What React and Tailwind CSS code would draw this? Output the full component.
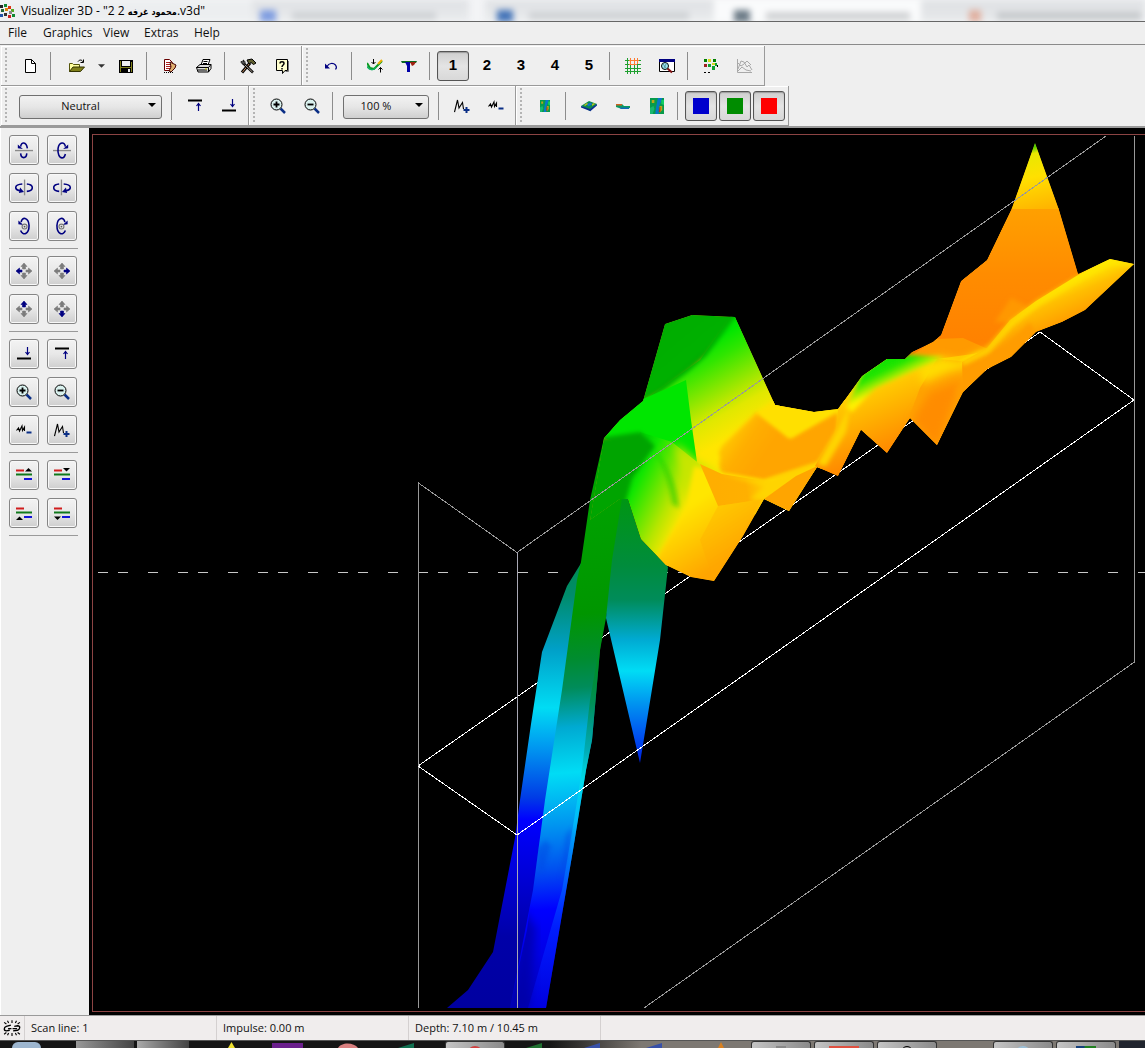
import React from 'react';

/* ---------- small building blocks ---------- */

function Icon({ children, size = 16, crisp = false }) {
  return (
    <svg width={size} height={size} viewBox="0 0 16 16" fill="none" aria-hidden="true" shapeRendering={crisp ? 'crispEdges' : 'auto'}>
      {children}
    </svg>
  );
}

function Grip() {
  return (
    <div className="mr-1 h-9 w-1 shrink-0 bg-[radial-gradient(circle_at_1px_1px,#b4b4b4_1px,transparent_1.5px)] bg-[length:4px_4px]" />
  );
}

function Sep() {
  return <div className="mr-1.5 ml-[3px] h-7 w-px shrink-0 bg-[#8c8c8c]" />;
}

function Group({ children }) {
  return (
    <div className="flex h-10 items-center border-r border-b border-[#9a9a9a] pr-0.5 pl-1 shadow-[inset_1px_1px_0_#ffffff]">
      <Grip />
      {children}
    </div>
  );
}

function Tool({ label, pressed = false, children }) {
  return (
    <button
      type="button"
      aria-label={label}
      aria-pressed={pressed || undefined}
      className="flex h-8 w-[34px] shrink-0 items-center justify-center"
    >
      {pressed ? (
        <span className="flex h-[30px] w-8 items-center justify-center rounded-[3px] border border-[#555] bg-linear-to-b from-[#cfcfcf] via-[#e4e4e4] to-[#d8d8d8] shadow-[inset_0_1px_1px_#9c9c9c]">
          {children}
        </span>
      ) : (
        children
      )}
    </button>
  );
}

function Digit({ n, pressed }) {
  return (
    <Tool label={'View ' + n} pressed={pressed}>
      <span className="font-['Liberation_Sans',sans-serif] text-[15px] font-bold text-black">{n}</span>
    </Tool>
  );
}

function Combo({ label, options, box }) {
  return (
    <div className={'relative shrink-0 ' + box}>
      <select
        aria-label={label}
        className="h-6 w-full appearance-none rounded-[3px] border border-[#707070] bg-linear-to-b from-[#f2f2f2] via-[#e6e6e6] to-[#cfcfcf] pr-5 text-center text-[11px] [text-align-last:center]"
      >
        {options.map((o) => (
          <option key={o}>{o}</option>
        ))}
      </select>
      <svg className="pointer-events-none absolute top-[11px] right-1.5" width="8" height="4" viewBox="0 0 8 4" aria-hidden="true">
        <path d="M0 0h8L4 4z" fill="#000" />
      </svg>
    </div>
  );
}

/* ---------- icons ---------- */

const NewIcon = () => (
  <Icon>
    <path d="M3.500 1.500h6l4 4v9h-10z" fill="#fff" stroke="#000" />
    <path d="M9.500 1.500v4h4" stroke="#000" />
  </Icon>
);
const OpenIcon = () => (
  <Icon>
    <path d="M.5 13.500v-8h3l1 1h6v3" fill="#ffff9c" stroke="#55550a" />
    <path d="M.5 13.500l3.500-4.500h11.500l-4 4.500z" fill="#80801a" stroke="#333300" />
    <path d="M9 3.500c1.500-2 4-2 5 .5M14.500 1.500v3h-3" stroke="#000" />
  </Icon>
);
const SaveIcon = () => (
  <Icon crisp>
    <path d="M1 2h14v13H1z" fill="#000" />
    <path d="M2 3h1v11H2zM13 4h1v10h-1zM3 9h10v1H3z" fill="#80801a" />
    <path d="M4 3h8v5H4z" fill="#efefef" />
    <path d="M10 11h2v3h-2z" fill="#efefef" />
  </Icon>
);
const ReportIcon = () => (
  <Icon>
    <path d="M2.500 1.500h5l3 3v8h-8z" fill="#fff" stroke="#600" />
    <path d="M4 4.500h4M4 6.500h6M4 8.500h5M4 10.500h5" stroke="#b02020" />
    <path d="M8 4l6 3-1 3-4 4-2-1 2-4z" fill="#e0b070" stroke="#400" />
    <path d="M2 14.500h9" stroke="#000" strokeDasharray="1 1" />
  </Icon>
);
const PrintIcon = () => (
  <Icon>
    <path d="M5 7l2-5.500h7L12 7z" fill="#fff" stroke="#000" />
    <path d="M7.500 3.500h4M7 5.500h4" stroke="#000" />
    <path d="M.5 9.500L4 6.500h11l-2.500 3zM.5 9.500h12v4.500H2z" fill="#ddd" stroke="#000" />
    <path d="M15 6.500v4l-2.500 3.500M2 12h9" stroke="#000" />
    <path d="M9 11h2" stroke="#cc0" />
  </Icon>
);
const ToolsIcon = () => (
  <Icon>
    <path d="M2 14.500L10 5" stroke="#000" strokeWidth="3" />
    <path d="M2.500 14L9.500 5.500" stroke="#c89060" />
    <path d="M3 5l10 9.500" stroke="#000" strokeWidth="2.500" />
    <path d="M4.500 6.500l8 7.500" stroke="#e0d0c0" strokeWidth=".8" />
    <path d="M7 2l5-1 4 4-2.500 1.500L11 4.500 9 6z" fill="#606030" stroke="#000" />
    <path d="M1 3.500c0 2 1.500 3 4 2.500.5-2-.5-3.500-2-4L3.500 4z" fill="#666" stroke="#000" strokeWidth=".8" />
  </Icon>
);
const HelpIcon = () => (
  <Icon>
    <path d="M2.500 1.500h11v11H11l-2.500 3v-3h-6z" fill="#ffffcf" stroke="#000" />
    <path d="M14.500 3v10.500h-3" stroke="#777" />
    <path d="M6 5.500C6 3.200 10 3.200 10 5.500 10 7 8 7 8 9M8 10v1.500" stroke="#000" strokeWidth="1.500" />
  </Icon>
);
const UndoIcon = () => (
  <Icon>
    <path d="M4 8.500C6 5 10 4.500 12.500 7c1.200 1.500.8 3.500 0 4.500" stroke="#000080" strokeWidth="1.200" />
    <path d="M2 5.500v5h5z" fill="#000080" />
  </Icon>
);
const WaveArrowsIcon = () => (
  <Icon>
    <path d="M0 5l3 5 4 1 4-4 4-4" stroke="#0a9a20" strokeWidth="2" />
    <path d="M0 8.500c3 4 6 4 9 1" stroke="#10b060" strokeWidth="1.500" />
    <path d="M11 6l4-4" stroke="#f0b000" strokeWidth="2" />
    <path d="M6.500 1v5M4.500 4l2 2 2-2M13.500 14.500v-5M11.500 11.500l2-2 2 2" stroke="#000" />
  </Icon>
);
const ConeIcon = () => (
  <Icon>
    <path d="M0 3h16l-1 2H1z" fill="#0a6a20" />
    <path d="M4 4h5v10H6V8z" fill="#0000a8" />
    <path d="M9 4h6l-2 3-2 1z" fill="#a02010" />
  </Icon>
);
const GridIcon = () => (
  <Icon crisp>
    <path d="M2 0v16M5 0v16M9 0v16M12 0v16M0 2h16M0 6h16M0 10h16M0 13h16" stroke="#1fa030" />
    <path d="M5 0v7M9 0v7M12 0v6M4 2h10M4 6h8" stroke="#ff7a30" />
  </Icon>
);
const PreviewIcon = () => (
  <Icon>
    <path d="M.5 1.500h15v12H.5z" fill="#fff" stroke="#000" />
    <path d="M0 1h16v3H0z" fill="#000080" />
    <circle cx="6" cy="8" r="3.500" fill="#9ee4ef" stroke="#000" />
    <path d="M4 6l3 4M7 6l-2 4" stroke="#3b7b88" strokeWidth=".7" />
    <path d="M8.500 10.500l4.500 4" stroke="#801010" strokeWidth="2" />
  </Icon>
);
const DotsIcon = () => (
  <Icon crisp>
    <path d="M1 1h3v3H1zM10 1h3v3h-3z" fill="#008000" />
    <path d="M5 1h3v3H5zM9 5h3v2H9z" fill="#d8d820" />
    <path d="M1 6h3v3H1z" fill="#a02020" />
    <path d="M5 6h3v3H5zM9 8h3v4H9zM12 5h2v3h-2z" fill="#10a030" />
    <path d="M1 14h2v1H1zM5 14h2v1H5zM14 7h1v2h-1z" fill="#000" />
  </Icon>
);
const ChartIcon = () => (
  <Icon>
    <path d="M.5 1v13.500H15" stroke="#a8a8a8" />
    <path d="M1 11l3-8 3 1 3 5 2-2 3 5M1 5l3 3 3-2 3-3 4 4M1 13l4-4 4 3 5 1" stroke="#a8a8a8" />
  </Icon>
);
const RaiseIcon = () => (
  <Icon>
    <path d="M1 2.500h14" stroke="#000" strokeWidth="2" />
    <path d="M11.500 13V6M9.500 8l2-2.500 2 2.500" stroke="#000080" strokeWidth="1.200" />
  </Icon>
);
const LowerIcon = () => (
  <Icon>
    <path d="M1 12.500h14" stroke="#000" strokeWidth="2" />
    <path d="M11.500 1v7M9.500 6l2 2.500 2-2.500" stroke="#000080" strokeWidth="1.200" />
  </Icon>
);
function Lens({ plus }) {
  return (
    <Icon>
      <path d="M10.500 10.500l4.500 4.500" stroke="#0b2f86" strokeWidth="2.500" />
      <circle cx="6.500" cy="6.500" r="5.500" fill="#d9f1ee" stroke="#000" />
      <path d={plus ? 'M3.500 6.500h6M6.500 3.500v6' : 'M3.500 6.500h6'} stroke="#000" strokeWidth="1.800" />
    </Icon>
  );
}
const AmpPlusIcon = () => (
  <Icon>
    <path d="M.5 14L3.500 2l1.500 8 3.500-5.500L9.500 11" stroke="#000" strokeWidth="1.100" />
    <path d="M9.500 12h6M12.500 9v6" stroke="#0b2f86" strokeWidth="2" />
  </Icon>
);
const AmpMinusIcon = () => (
  <Icon>
    <path d="M.5 8.500L2.500 6l1 3 2.500-5 .5 4.500 2-3.500v4" stroke="#000" strokeWidth="1.100" />
    <path d="M10.500 10.500h5" stroke="#0b2f86" strokeWidth="2" />
  </Icon>
);
const MapGlyph = () => (
  <g>
    <path d="M0 0h16v16H0z" fill="#079b4b" />
    <path d="M9 0h5l-2 5-2 4v7H6l1-7z" fill="#0878c8" />
    <path d="M0 10l4-2 1 3-2 5H0z" fill="#18b870" />
    <path d="M11 8h3v4l-3 3zM2 2h3v3H2z" fill="#b8a81c" />
    <path d="M13 2h3v5l-3-1z" fill="#10d060" />
    <path d="M11 9h1v5h-2z" fill="#c83010" />
  </g>
);
const SmallMapIcon = () => (
  <svg width="10" height="12" viewBox="0 0 16 16" preserveAspectRatio="none" aria-hidden="true"><MapGlyph /></svg>
);
const BigMapIcon = () => (
  <svg width="14" height="16" viewBox="0 0 16 16" preserveAspectRatio="none" aria-hidden="true"><MapGlyph /></svg>
);
const PlateIcon = () => (
  <Icon>
    <path d="M0 8l8-5 8 3-7 7z" fill="#0a8a50" />
    <path d="M0 8l9 3v2L0 9.500zM9 11l7-5v1.500l-7 6z" fill="#0a2c90" />
    <path d="M6 6l4-1.500 1 2-4 2z" fill="#1070d0" />
    <path d="M3 7l3-2 1 1-3 2zM11 6l2-1 1 1-3 2z" fill="#b8c020" />
  </Icon>
);
const SideIcon = () => (
  <Icon>
    <path d="M1 6h6l2 2h6v2l-5 1H7L1 9z" fill="#0a9a60" />
    <path d="M1 6h6v1.500H1z" fill="#d06020" />
    <path d="M4 9.500h10v1.500H6z" fill="#1068b8" />
  </Icon>
);

function RotX({ flip }) {
  return (
    <Icon size={18}>
      <g transform={flip ? 'translate(16 0) scale(-1 1)' : undefined}>
        <path d="M0 8.500h16" stroke="#8a8a8a" strokeWidth="1.200" />
        <path d={flip ? 'M5 5C5.500.5 10.500.500 11.500 6.500 12 11 10.500 15 8 15 6.500 15 5.500 13.500 5 11.500' : 'M5 5C5.500.5 10 .5 11 6.500M5 11c.5 5 5 5 5.500 0'} stroke="#000080" strokeWidth="1.400" />
        <path d="M2.500 3l4.500 4-4.500-.5z" fill="#000080" />
      </g>
    </Icon>
  );
}
function RotY({ flip }) {
  return (
    <Icon size={18}>
      <g transform={flip ? 'translate(16 0) scale(-1 1)' : undefined}>
        <path d="M8.500 .5v14" stroke="#8a8a8a" strokeWidth="1.200" />
        <path d="M6.500 4.500C-1 5-1 9.500 5 10.500M10.500 4.500c6.500.5 6.500 6 0 6.500" stroke="#000080" strokeWidth="1.400" />
        <path d="M3.500 12.500l1-5 3.500 4z" fill="#000080" />
      </g>
    </Icon>
  );
}
function RotZ({ flip }) {
  return (
    <Icon size={18}>
      <g transform={flip ? 'translate(16 0) scale(-1 1)' : undefined}>
        <path d="M5.500 4.500C6-.5 12 0 12.500 7.500 12.500 15.500 7 17 5 12" stroke="#000080" strokeWidth="1.400" />
        <path d="M3 3l4.500 4-4.500-.5z" fill="#000080" />
        <circle cx="8.500" cy="8.500" r="2.200" stroke="#777" />
        <circle cx="8.500" cy="8.500" r=".8" fill="#555" />
      </g>
    </Icon>
  );
}
function Move({ dir }) {
  const parts = {
    left: 'M0 8l3.500-3v2H6v2H3.500v2z',
    right: 'M16 8l-3.500-3v2H10v2h2.500v2z',
    up: 'M8 0l3 3.500H9.500V6h-3V3.500H5z',
    down: 'M8 16l3-3.500H9.500V10h-3v2.500H5z',
  };
  return (
    <Icon>
      {Object.keys(parts).map((k) => (
        <path
          key={k}
          d={parts[k]}
          fill={k === dir ? '#000080' : '#7c7c7c'}
          stroke={k === dir ? '#000080' : '#7c7c7c'}
          strokeWidth=".6"
        />
      ))}
    </Icon>
  );
}
function Layers({ arrow }) {
  const arrows = {
    upTop: 'M9 4.500h7L12.500 1z',
    downTop: 'M9 1h7l-3.500 3.500z',
    upBottom: 'M0 15h7l-3.500-3.500z',
    downBottom: 'M0 11.500h7L3.500 15z',
  };
  return (
    <Icon>
      <path d="M0 3.500h8" stroke="#d01c1c" strokeWidth="2" />
      <path d="M0 7.500h16" stroke="#10781c" strokeWidth="2" />
      <path d="M8 12h8" stroke="#1414d8" strokeWidth="2" />
      <path d={arrows[arrow]} fill="#000" />
    </Icon>
  );
}
const LinkIcon = () => (
  <Icon size={18}>
    <path d="M7 5.500L3 6.500C.5 7.500.5 10.500 3 10.500l3-.5M4.500 8.500h3M9 10.500l4-.5c2.500-1 2.500-4 0-4l-3 .5M8.500 8.500h4" stroke="#000" strokeWidth="1.200" />
    <path d="M8 1v2.500M4 1.500l1 2M12 1.500l-1 2M8 12.500V15M4 14.500l1-2M12 14.500l-1-2M1 3l2 1.500M15 3l-2 1.500M1 13.500L3 12M15 13.500L13 12" stroke="#000" />
  </Icon>
);

/* ---------- side panel ---------- */

const sideGroups = [
  [
    ['Tilt up', <RotX />], ['Tilt down', <RotX flip />],
    ['Turn left', <RotY />], ['Turn right', <RotY flip />],
    ['Roll left', <RotZ />], ['Roll right', <RotZ flip />],
  ],
  [
    ['Move left', <Move dir="left" />], ['Move right', <Move dir="right" />],
    ['Move up', <Move dir="up" />], ['Move down', <Move dir="down" />],
  ],
  [
    ['Lower plane', <LowerIcon />], ['Raise plane', <RaiseIcon />],
    ['Zoom in', <Lens plus />], ['Zoom out', <Lens />],
    ['Less amplitude', <AmpMinusIcon />], ['More amplitude', <AmpPlusIcon />],
  ],
  [
    ['Upper limit up', <Layers arrow="upTop" />], ['Upper limit down', <Layers arrow="downTop" />],
    ['Lower limit up', <Layers arrow="upBottom" />], ['Lower limit down', <Layers arrow="downBottom" />],
  ],
];

function SidePanel() {
  return (
    <aside className="w-[89px] shrink-0 border-l border-white bg-[#efefef] pt-[7px] pl-2">
      {sideGroups.map((group, i) => (
        <div key={i} className="mb-[7px] w-[69px] border-b border-[#9a9a9a] pb-[7px]">
          <div className="grid w-[68px] grid-cols-2 gap-2">
            {group.map(([label, icon]) => (
              <button
                key={label}
                type="button"
                aria-label={label}
                className="flex size-[30px] items-center justify-center rounded-[3px] border border-[#858585] bg-linear-to-b from-[#f3f3f3] via-[#e8e8e8] to-[#cecece] shadow-[inset_0_0_0_1px_#f8f8f8]"
              >
                {icon}
              </button>
            ))}
          </div>
        </div>
      ))}
    </aside>
  );
}

/* ---------- 3D scene ---------- */

function Grad({ id, x1, y1, x2, y2, stops }) {
  return (
    <linearGradient id={id} gradientUnits="userSpaceOnUse" x1={x1} y1={y1} x2={x2} y2={y2}>
      {stops.map(([o, c]) => (
        <stop key={o} offset={o} stopColor={c} />
      ))}
    </linearGradient>
  );
}

const upperOutline =
  '604,438 620,420 643,401 665,324 692,315 735,317 775,405 814,412 838,409 862,376 887,359 905,359 912,352 933,342 941,335 961,281 987,260 1012,208 1035,143 1059,210 1078,274 1110,259 1134,264 1085,310 1062,322 1036,332 1011,357 987,369 963,392 937,445 910,418 887,453 861,430 838,476 817,467 789,511 764,499 743,536 714,581 691,577 666,565 641,539 628,499 620,499 590,520';

function Scene() {
  return (
    <svg className="block h-full w-full" viewBox="89 128 1056 887" preserveAspectRatio="xMinYMin slice" role="img" aria-label="3D surface of the scan">
      <defs>
        <Grad id="blade" x1={0} y1={560} x2={0} y2={1008} stops={[[0, '#008c50'], [0.08, '#008c6c'], [0.2, '#00a0c8'], [0.33, '#00dcf4'], [0.42, '#0096f0'], [0.53, '#003ce6'], [0.58, '#0000ff'], [0.72, '#0000d2'], [0.84, '#0000a8'], [1, '#0000a0']]} />
        <Grad id="strip" x1={540} y1={448} x2={584} y2={1008} stops={[[0, '#00a800'], [0.3, '#009600'], [0.38, '#008c30'], [0.43, '#008c5a'], [0.5, '#00aad2'], [0.58, '#00dcf5'], [0.67, '#0096f0'], [0.75, '#0050f0'], [0.82, '#0000ff'], [0.9, '#0000e6'], [1, '#0000b4']]} />
        <Grad id="sliver" x1={0} y1={618} x2={0} y2={1008} stops={[[0, '#009600'], [0.22, '#008c40'], [0.34, '#00a0a0'], [0.42, '#00e0e8'], [0.52, '#00c8ff'], [0.65, '#0078ff'], [0.8, '#0028ff'], [1, '#0000f0']]} />
        <Grad id="cone" x1={0} y1={500} x2={0} y2={763} stops={[[0, '#009614'], [0.25, '#008c3c'], [0.38, '#008c5a'], [0.53, '#00aad2'], [0.65, '#00dcf5'], [0.77, '#0096f0'], [0.9, '#0050f0'], [1, '#0020e0']]} />
        <Grad id="peakBack" x1={650} y1={320} x2={700} y2={380} stops={[[0, '#00ac00'], [0.7, '#00b000'], [1, '#00a000']]} />
        <Grad id="ridge" x1={694} y1={350} x2={740} y2={432} stops={[[0, '#00e600'], [0.2, '#30e600'], [0.75, '#e0e800'], [1, '#ffe600']]} />
        <Grad id="slope" x1={622} y1={490} x2={682} y2={520} stops={[[0, '#00d800'], [0.15, '#10e600'], [0.7, '#b4e600'], [1, '#ffe600']]} />
        <Grad id="spike" x1={1030} y1={143} x2={1045} y2={209} stops={[[0, '#30c800'], [0.08, '#60d000'], [0.16, '#e8e800'], [0.5, '#ffe000'], [1, '#ffb400']]} />
        <Grad id="spikeBody" x1={0} y1={209} x2={0} y2={340} stops={[[0, '#ffa000'], [0.5, '#ff8c00'], [1, '#ff8200']]} />
        <Grad id="edge" x1={1050} y1={285} x2={1066} y2={322} stops={[[0, '#ffee00'], [0.45, '#ffbe00'], [1, '#ff9c00']]} />
        <Grad id="tooth" x1={870} y1={360} x2={905} y2={440} stops={[[0, '#fff000'], [0.4, '#ffc400'], [1, '#ff8c00']]} />
        <Grad id="cap" x1={885} y1={355} x2={898} y2={382} stops={[[0, '#00e000'], [0.5, '#28e600'], [1, '#fff000']]} />
        <Grad id="front" x1={690} y1={505} x2={726} y2={560} stops={[[0, '#ffe600'], [0.35, '#ffd000'], [1, '#ffa500']]} />
        <Grad id="valley" x1={716} y1={430} x2={760} y2={460} stops={[[0, '#ffd800'], [0.6, '#ffae00'], [1, '#ffa500']]} />
        <Grad id="lip" x1={716} y1={490} x2={775} y2={480} stops={[[0, '#ffae00'], [0.5, '#ffb000'], [1, '#ffe000']]} />
        <clipPath id="upperClip"><polygon points={upperOutline} /></clipPath>
        <clipPath id="stripClip"><polygon points="604,438 590,500 581,562 577,580 562,690 545,800 527,930 510,1008 546,1008 573,850 586,770 592,740 600,650 606,618 628,499 641,432" /></clipPath>
        <filter id="soft" x="-20%" y="-20%" width="140%" height="140%"><feGaussianBlur stdDeviation="4" /></filter>
        <filter id="softer" x="-20%" y="-20%" width="140%" height="140%"><feGaussianBlur stdDeviation="2" /></filter>
      </defs>

      {/* reference level and lines behind the surface */}
      <g shapeRendering="crispEdges" fill="none">
        <path d="M98 572.500H1145" stroke="#c8c8c8" strokeDasharray="10 10 10 20 10 20" />
        <path d="M418 766L1040 332L1134 400" stroke="#fff" />
      </g>

      {/* descending blades */}
      <polygon points="583,560 567,586 542,652 531,724 520,800 515,838 493,952 468,990 447,1008 535,1008 560,850 590,600" fill="url(#blade)" />
      <polygon points="604,438 590,500 581,562 577,580 562,690 545,800 533,890 510,1008 546,1008 573,850 586,770 592,740 600,650 606,618 628,499 641,432" fill="url(#strip)" />
      <polygon points="606,608 600,650 592,740 586,770 573,850 546,1008 528,1008 562,890 574,820 582,770 590,700" fill="url(#sliver)" opacity=".7" />
      <g clipPath="url(#stripClip)">
        <path d="M537 850l8-10 6 6-10 28zM566 835l6-8-4 30-8 25z" fill="#0040e0" opacity=".4" filter="url(#softer)" />
        <path d="M520 905l-8 103h18l6-80z" fill="#0000a0" opacity=".7" filter="url(#soft)" />
      </g>
      <polygon points="622,498 628,499 641,539 668,567 660,640 640,763 606,618 612,560" fill="url(#cone)" />

      {/* upper surface */}
      <g clipPath="url(#upperClip)">
        <polygon points={upperOutline} fill="#ffa500" />
        {/* valley between the peak and the right half */}
        <polygon points="690,380 757,405 775,400 850,400 838,440 790,512 690,520" fill="#ffe400" />
        <polygon points="643,401 700,360 735,310 785,405 757,412 722,446 712,474 697,462 640,432" fill="url(#ridge)" />
        <polygon points="722,446 757,412 790,438 838,412 838,440 820,463 764,481 722,474 714,462" fill="url(#valley)" filter="url(#softer)" />
        <polygon points="757,412 775,400 842,404 812,424 790,438" fill="#ffe000" filter="url(#softer)" />
        <polygon points="696,462 712,448 720,456 718,474 730,500 690,510" fill="#ffe600" filter="url(#softer)" />
        <polygon points="630,420 655,300 692,290 745,310 735,318 706,356 690,370 664,390 643,402" fill="url(#peakBack)" filter="url(#softer)" />
        <polygon points="604,438 620,418 643,399 666,389 686,380 691,420 697,462 670,445 640,450" fill="#00e600" />
        <polygon points="640,432 672,442 697,462 705,470 722,505 690,515 680,560 660,570 620,520 620,470" fill="url(#slope)" />
        <polygon points="675,443 697,461 718,474 722,505 690,510" fill="#c8e600" filter="url(#soft)" />
        <path d="M656 452c12 12 22 36 23 56l-7-4c-3-18-7-34-16-52z" fill="#10c800" opacity=".5" filter="url(#softer)" />
        <polygon points="606,437 640,432 655,446 632,478 626,500 600,600 560,560 590,440" fill="#00a404" filter="url(#softer)" />
        {/* front lobe */}
        <polygon points="694,466 722,474 764,481 817,464 764,499 743,540 720,590 691,590 650,570 684,512" fill="url(#front)" filter="url(#softer)" />
        <polygon points="700,464 722,474 764,481 790,476 764,499 718,506" fill="url(#lip)" />
        <polygon points="720,474 764,481 820,462 842,424 826,466 764,499 750,499 766,486" fill="#ffd400" filter="url(#softer)" />
        <polygon points="718,506 764,499 743,536 714,581 700,540" fill="#ffa800" opacity=".3" />
        <polygon points="764,499 796,476 826,462 789,512" fill="#ffa500" />

        {/* right half */}
        <polygon points="905,358 912,352 933,342 941,335 961,281 987,260 1012,208 1059,208 1080,276 1010,340 985,350 961,361" fill="url(#spikeBody)" />
        <polygon points="1035,140 1060,209 1011,209" fill="url(#spike)" />
        <polygon points="995,322 1011,298 1027,306 1020,322" fill="#ff9800" filter="url(#softer)" />
        <polygon points="905,360 936,339 963,338 990,350 965,361" fill="#ff9a00" />
        <polygon points="838,409 862,376 887,358 937,359 987,352 960,392 937,446 910,418 887,454 861,430 838,477 815,466 836,430" fill="url(#tooth)" />
        <polygon points="937,359 961,361 987,349 1012,320 990,370 963,393 937,446 908,420 920,388" fill="#ffa200" />
        <polygon points="918,364 940,357 962,361 990,347 975,366 950,372 922,384" fill="#ffdc00" filter="url(#soft)" />
        <polygon points="912,420 930,392 962,380 937,448" fill="#ff8c00" filter="url(#soft)" />
        <polygon points="846,408 862,374 887,354 944,357 910,372 875,388 852,412" fill="url(#cap)" filter="url(#softer)" />
        <polygon points="817,464 838,428 850,404 846,432 826,466" fill="#ffd400" filter="url(#softer)" />
        <polygon points="963,392 962,362 987,348 1010,320 1036,301 1078,275 1110,258 1136,264 1085,311 1062,322 1036,332 1011,357 987,370" fill="url(#edge)" />
        <polyline points="962,363 987,351 1012,323 1038,303 1078,279 1110,262 1136,264" fill="none" stroke="#ffe800" strokeWidth="6" opacity=".65" filter="url(#softer)" />
        <polygon points="955,392 985,362 1005,345 1030,322 1036,334 1011,358 987,370 960,396" fill="#ff9c00" filter="url(#softer)" />
      </g>

      {/* bounding box lines in front */}
      <g shapeRendering="crispEdges" fill="none">
        <path d="M418.500 1008V483L517 552.500L1106 136" stroke="#999" />
        <path d="M517.500 552V1008" stroke="#a8a8b4" />
        <path d="M1134.500 136V662L644 1008" stroke="#999" />
        <path d="M418 766L517 835L1134 400" stroke="#fff" />
        <path d="M1145 134.500H92.500V1011.500H1145" stroke="#8c4444" />
      </g>
    </svg>
  );
}

/* ---------- window parts ---------- */

function AppLogo() {
  const dots = [
    [0, 2, '#222'], [4, 1, '#118833'], [8, 3, '#dd3311'], [11, 6, '#55aa22'],
    [1, 6, '#226633'], [5, 5, '#dd8811'], [0, 11, '#2255aa'], [4, 10, '#333'],
    [8, 12, '#cc2222'], [12, 11, '#118833'], [9, 8, '#888'],
  ];
  return (
    <Icon>
      {dots.map(([x, y, c]) => (
        <rect key={x + '-' + y} x={x} y={y} width="3" height="3" fill={c} />
      ))}
    </Icon>
  );
}

function TitleBar() {
  return (
    <header className="relative flex h-[22px] items-center overflow-hidden border-b border-[#666] bg-[#f3f4f6]">
      <div className="absolute inset-0 flex items-end blur-[3px]" aria-hidden="true">
        <div className="h-full w-[22%] bg-[#eceef0]" />
        <div className="mr-4 h-full w-[19%] bg-linear-to-b from-[#dfe1e4] to-[#e9ebed]">
          <div className="mt-2.5 ml-2 flex items-center gap-4">
            <div className="h-3 w-4 bg-[#7f9de0]" />
            <div className="h-2 w-36 bg-[#cfd2d5]" />
          </div>
        </div>
        <div className="h-full w-[20%] bg-linear-to-b from-[#dfe1e4] to-[#e9ebed]">
          <div className="mt-2.5 ml-3 flex items-center gap-4">
            <div className="h-3 w-4 bg-[#4474b8]" />
            <div className="h-2 w-40 bg-[#cfd2d5]" />
          </div>
        </div>
        <div className="h-full w-[18%] bg-[#fafbfc]">
          <div className="mt-2.5 ml-5 flex items-center gap-4">
            <div className="h-3 w-4 bg-[#6b7a86]" />
            <div className="h-2 w-36 bg-[#cfd1d3]" />
          </div>
        </div>
        <div className="h-full flex-1 bg-linear-to-b from-[#dfe1e4] to-[#e6e8ea]">
          <div className="mt-2.5 ml-12 flex items-center gap-4">
            <div className="h-3 w-3 bg-[#e0b0a0]" />
            <div className="h-2 w-36 bg-[#c6c9cc]" />
          </div>
        </div>
      </div>
      <div className="relative flex items-center gap-[5px]">
        <AppLogo />
        <h1 className="text-xs whitespace-pre text-black">
          {'Visualizer 3D - "2 2 '}
          <bdi className="font-['DejaVu_Sans_Condensed','DejaVu_Sans',sans-serif] text-[9px] font-bold">محمود غرفه</bdi>
          {'.v3d"'}
        </h1>
      </div>
    </header>
  );
}

function MenuBar() {
  return (
    <nav className="flex h-[23px] items-center border-b border-[#8a8a8a] pl-2 text-xs" aria-label="Main menu">
      <button type="button" className="w-[35px] text-left">File</button>
      <button type="button" className="w-[60px] text-left">Graphics</button>
      <button type="button" className="w-[41px] text-left">View</button>
      <button type="button" className="w-[50px] text-left">Extras</button>
      <button type="button" className="text-left">Help</button>
    </nav>
  );
}

function Toolbars() {
  return (
    <div className="border-b-2 border-[#9a9a9a] pt-px pl-px">
      <div className="flex">
        <Group>
          <Tool label="New"><NewIcon /></Tool>
          <Sep />
          <div className="ml-[3px] flex">
            <Tool label="Open"><OpenIcon /></Tool>
            <button type="button" aria-label="Open recent" className="flex w-[15px] items-center justify-center">
              <svg width="7" height="4" viewBox="0 0 8 4" aria-hidden="true"><path d="M0 0h8L4 4z" fill="#333" /></svg>
            </button>
          </div>
          <Tool label="Save"><SaveIcon /></Tool>
          <Sep />
          <Tool label="Report"><ReportIcon /></Tool>
          <Tool label="Print"><PrintIcon /></Tool>
          <Sep />
          <Tool label="Options"><ToolsIcon /></Tool>
          <Tool label="Help"><HelpIcon /></Tool>
        </Group>
        <Group>
          <Tool label="Undo"><UndoIcon /></Tool>
          <Sep />
          <Tool label="Adjust signal"><WaveArrowsIcon /></Tool>
          <Tool label="Depth"><ConeIcon /></Tool>
          <Sep />
          <Digit n="1" pressed />
          <Digit n="2" />
          <Digit n="3" />
          <Digit n="4" />
          <Digit n="5" />
          <Sep />
          <Tool label="Grid"><GridIcon /></Tool>
          <Tool label="Preview"><PreviewIcon /></Tool>
          <Sep />
          <Tool label="Points"><DotsIcon /></Tool>
          <Tool label="Chart"><ChartIcon /></Tool>
        </Group>
      </div>
      <div className="flex">
        <Group>
          <Combo label="Soil type" options={['Neutral']} box="ml-1.5 mr-1.5 w-[143px]" />
          <Sep />
          <Tool label="Raise"><RaiseIcon /></Tool>
          <Tool label="Lower"><LowerIcon /></Tool>
        </Group>
        <Group>
          <Tool label="Zoom in"><Lens plus /></Tool>
          <Tool label="Zoom out"><Lens /></Tool>
          <Sep />
          <Combo label="Zoom" options={['100 %']} box="ml-1 mr-1.5 w-[86px]" />
          <Sep />
          <Tool label="More amplitude"><AmpPlusIcon /></Tool>
          <Tool label="Less amplitude"><AmpMinusIcon /></Tool>
        </Group>
        <Group>
          <Tool label="Small map"><SmallMapIcon /></Tool>
          <Sep />
          <Tool label="Perspective"><PlateIcon /></Tool>
          <Tool label="Side view"><SideIcon /></Tool>
          <Tool label="Top view"><BigMapIcon /></Tool>
          <Sep />
          <Tool label="Blue" pressed><span className="size-4 bg-[#0000cd]" /></Tool>
          <Tool label="Green" pressed><span className="size-4 bg-[#008c00]" /></Tool>
          <Tool label="Red" pressed><span className="size-4 bg-[#ff0000]" /></Tool>
        </Group>
      </div>
    </div>
  );
}

function StatusBar() {
  return (
    <footer className="flex h-[25px] shrink-0 items-stretch border-t border-[#9a9a9a] bg-[#f0eded] text-[11px] leading-[23px]">
      <div className="flex w-[25px] items-center justify-center border-r border-[#d4d0d0]"><LinkIcon /></div>
      <div className="w-48 border-r border-[#d4d0d0] pl-1.5">Scan line: 1</div>
      <div className="w-48 border-r border-[#d4d0d0] pl-1.5">Impulse: 0.00 m</div>
      <div className="w-48 border-r border-[#d4d0d0] pl-1.5">Depth: 7.10 m / 10.45 m</div>
    </footer>
  );
}

function TaskButton({ children }) {
  return (
    <div className="flex h-full w-[60px] shrink-0 justify-center overflow-hidden rounded-t-[3px] border border-b-0 border-[#333] bg-linear-to-r from-[#c4c4c4] to-[#8a8a8a] pt-1">
      {children}
    </div>
  );
}

function TaskBar() {
  return (
    <div className="flex h-2 shrink-0 items-end gap-[3px] overflow-hidden border-t border-[#555] bg-linear-to-r from-[#151515] from-48% to-[#7d7872] to-56%" aria-hidden="true">
      <div className="mr-8 ml-3 h-1.5 w-[29px] shrink-0 rounded-t-full bg-[#9db6cf]" />
      <div className="h-full w-[58px] shrink-0 bg-linear-to-r from-[#999] to-[#444]" />
      <div className="h-full w-[52px] shrink-0 bg-linear-to-r from-[#aaa] to-[#444]" />
      <svg className="shrink-0" width="250" height="7" viewBox="0 0 250 7">
        <path d="M36 7l3.500-6L43 7z" fill="#eee030" />
        <path d="M80 2h31v5H80z" fill="#6a1f8c" />
        <path d="M146 7c3-6 16-6 20 0z" fill="#d98080" />
        <path d="M206 7l16-5v5z" fill="#107050" />
      </svg>
      <TaskButton><div className="h-2 w-4 rounded-t-full bg-[#d04040]" /></TaskButton>
      <svg className="min-w-0 flex-1" height="7" viewBox="0 0 245 7" preserveAspectRatio="xMinYMin slice">
        <path d="M18 7l16-5v5z" fill="#207030" />
        <path d="M76 7l16-5v5zM138 7l16-5v5z" fill="#3850a8" />
        <path d="M210 7l3-6 3 6z" fill="#d88020" />
      </svg>
      <TaskButton><div className="h-1 w-2.5 bg-[#888]" /></TaskButton>
      <TaskButton><div className="h-2 w-[30px] border-t-2 border-[#e05040] bg-[#a01010]" /></TaskButton>
      <TaskButton><div className="h-2 w-3 rounded-t-full border border-black" /></TaskButton>
      <div className="w-[50px] shrink-0" />
      <TaskButton><div className="h-2 w-4 rounded-t-full bg-[#9cc0d8]" /></TaskButton>
      <TaskButton><div className="h-2 w-5 bg-linear-to-r from-[#15407c] from-40% to-[#208020] to-45%" /></TaskButton>
      <div className="h-full w-[26px] shrink-0 bg-[#20242e]" />
    </div>
  );
}

export default function App() {
  return (
    <div className="flex h-screen flex-col overflow-hidden bg-[#efefef] font-['Open_Sans','DejaVu_Sans',sans-serif] text-[#111]">
      <TitleBar />
      <MenuBar />
      <Toolbars />
      <main className="flex min-h-0 flex-1">
        <SidePanel />
        <section className="min-w-0 flex-1 bg-black">
          <Scene />
        </section>
      </main>
      <StatusBar />
      <TaskBar />
    </div>
  );
}
